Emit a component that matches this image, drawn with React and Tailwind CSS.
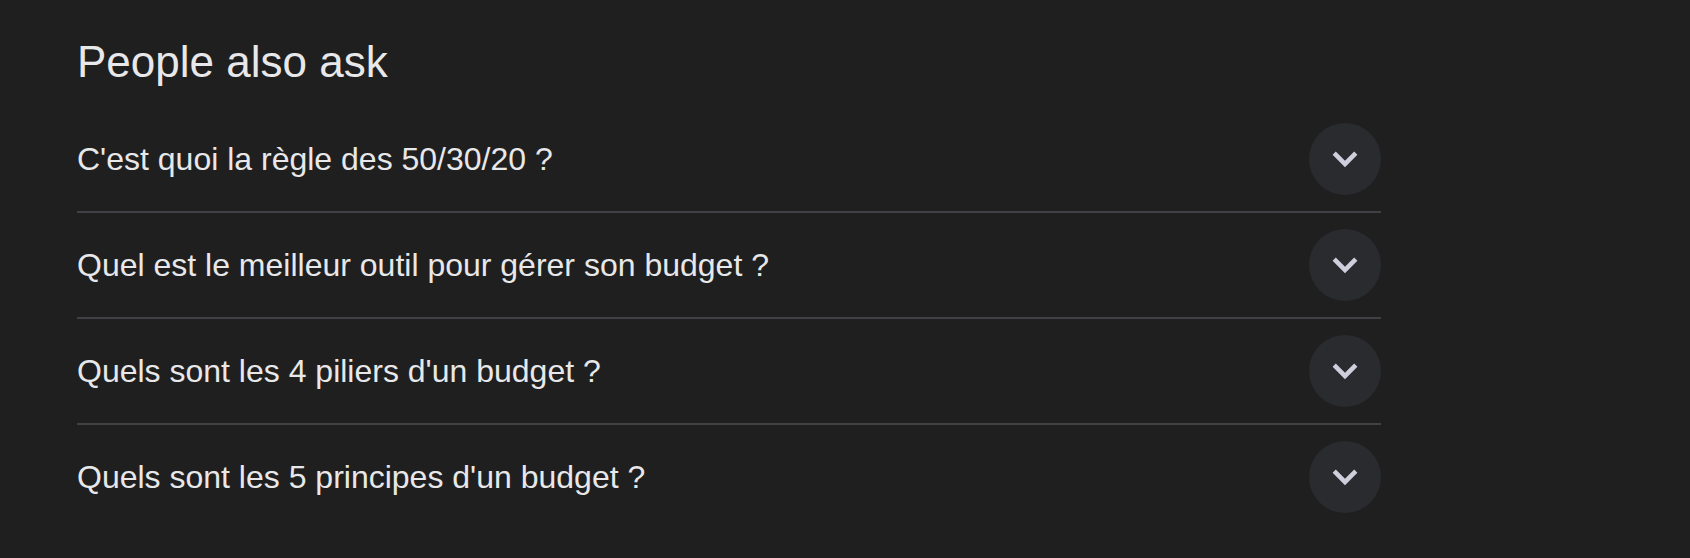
import { useState } from "react";

const QUESTIONS = [
	"C'est quoi la règle des 50/30/20 ?",
	"Quel est le meilleur outil pour gérer son budget ?",
	"Quels sont les 4 piliers d'un budget ?",
	"Quels sont les 5 principes d'un budget ?",
];

function Chevron() {
	return (
		<svg viewBox="0 0 24 24" className="h-[48px] w-[48px]" fill="#cdcfdc">
			<path d="M16.59 8.3 12 12.88 7.41 8.3 5.8 9.9l6.2 6.2 6.2-6.2z" />
		</svg>
	);
}

function QuestionRow({ text, last, open, onToggle }) {
	return (
		<div className={last ? "" : "border-b-2 border-[#404144]"}>
			<button
				type="button"
				onClick={onToggle}
				className="flex h-[104px] w-full items-center justify-between text-left"
			>
				<span className="text-[32px] leading-[40px] text-[#e8e8ea]">{text}</span>
				<span
					className={
						"flex h-[72px] w-[72px] shrink-0 items-center justify-center rounded-full bg-[#2a2b2e] transition-transform " +
						(open ? "rotate-180" : "")
					}
				>
					<Chevron />
				</span>
			</button>
		</div>
	);
}

export default function App() {
	const [openIdx, setOpenIdx] = useState(null);

	return (
		<div
			className="min-h-[558px] bg-[#1f1f1f]"
			style={{ fontFamily: '"Liberation Sans", Arial, sans-serif' }}
		>
			<div className="ml-[77px] w-[1304px] pt-[36px]">
				<h2 className="mb-[19px] text-[44px] leading-[52px] text-[#e8e8ea]">
					People also ask
				</h2>
				<div>
					{QUESTIONS.map((q, i) => (
						<QuestionRow
							key={q}
							text={q}
							last={i === QUESTIONS.length - 1}
							open={openIdx === i}
							onToggle={() => setOpenIdx(openIdx === i ? null : i)}
						/>
					))}
				</div>
			</div>
		</div>
	);
}
